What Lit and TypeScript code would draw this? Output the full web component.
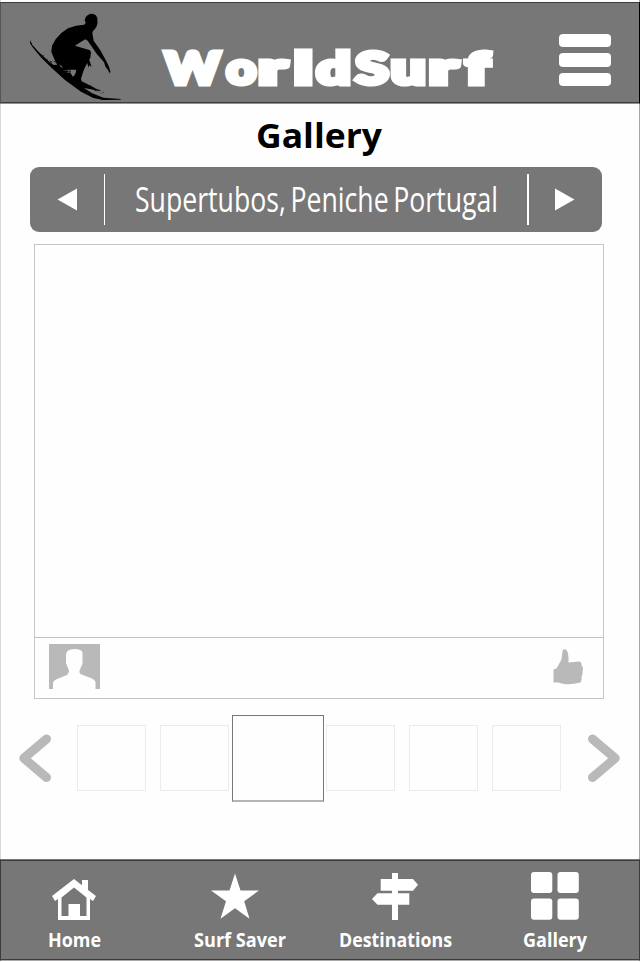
import { LitElement, html, svg, css } from "lit";
import { customElement } from "lit/decorators.js";

interface Fit { text: string; width: number; }

/** Text stretched to a known advance width. */
const fitted = (cls: string, f: Fit, height: number, baseline: number) => html`
  <svg class=${cls} width=${f.width} height=${height}>
    <text x="0" y=${baseline} textLength=${f.width} lengthAdjust="spacingAndGlyphs">${f.text}</text>
  </svg>`;

const LOGO: [string, number, number][] = [
  ["W", 3, 55], ["o", 64.5, 29.5], ["r", 96.5, 28], ["l", 132, 18.5], ["d", 154.5, 34],
  ["S", 193.5, 33], ["u", 229, 34.5], ["r", 267, 28.5], ["f", 303.5, 24],
];

const home = svg`<svg width="44" height="42" viewBox="0 0 44 42" fill="#fff">
  <path d="M22 0 30 6.3V1h6v10l8 6-3 5-3-2V41H6V20l-3 2-3-5Z"/>
  <path fill="#777" d="M22 8.5 34.5 18.5V37H28V25H16.5V37H9.500V18.500Z"/></svg>`;
const star = svg`<svg width="48" height="46" viewBox="0 0 48 46" fill="#fff">
  <path d="M24 0 29.500 17H48L33.200 27.700 38.500 45.300 24 34.800 9.500 45.300 15 27.700 0 17H18.500Z"/></svg>`;
const sign = svg`<svg width="46" height="47" viewBox="0 0 46 47" fill="#fff">
  <path d="M20 0H26V6H41L46 11.800 41 17.700H26V20.300H37.300V31.800H26V47H20V31.800H5.500L0 26 5.500 20.300H20V17.700H8.700V6H20Z"/></svg>`;
const grid = svg`<svg width="48" height="48" viewBox="0 0 48 48" fill="#fff">
  <rect width="21.300" height="21" rx="3"/><rect x="26.500" width="21.300" height="21" rx="3"/>
  <rect y="26.500" width="21.300" height="21.300" rx="3"/><rect x="26.500" y="26.500" width="21.300" height="21.300" rx="3"/></svg>`;

const TABS = [
  { icon: home, label: { text: "Home", width: 53 }, cls: "home" },
  { icon: star, label: { text: "Surf Saver", width: 92 }, cls: "saver" },
  { icon: sign, label: { text: "Destinations", width: 113 }, cls: "dest" },
  { icon: grid, label: { text: "Gallery", width: 64 }, cls: "gal" },
];

@customElement("app-root")
export class AppRoot extends LitElement {
  static styles = css`
    :host { display: block; width: 640px; height: 962px; background: #fefefe; font-family: "Open Sans", "Noto Sans", sans-serif; }
    * { box-sizing: border-box; }
    svg { display: block; overflow: visible; flex: none; }
    .page { display: flex; flex-direction: column; height: 961px; padding-top: 2px; border-left: 1px solid #d8d8d8; border-right: 1px solid #a6a6a6; }
    header { display: flex; flex: none; height: 102px; margin: 0 -1px; background: #777; border: 1px solid #3c3c3c; border-left-color: #555; border-right-color: #000; box-shadow: inset 0 -1px #3c3c3c; border-bottom-color: #929292; }
    .surfer { margin: 9px 0 0 27px; }
    .logo { margin: 45px 0 0 40px; font: 900 43px Lato, sans-serif; fill: #fff; stroke: #fff; stroke-width: 5px; }
    .menu { display: flex; flex-direction: column; gap: 6px; margin: 30.500px 0 0 64.500px; }
    .menu i { width: 52.500px; height: 13.500px; border-radius: 4px; background: #fff; }
    main { flex: 1; display: flex; flex-direction: column; }
    .title { margin: 13px 0 0 255px; font: 700 34px "Open Sans", sans-serif; fill: #000; }
    .bar { display: flex; flex: none; margin: 10px 0 0 29px; width: 572px; height: 64.500px; border-radius: 9px; background: #777; }
    .bar .prev { margin: 21px 0 0 27px; }
    .bar .rule { width: 1.500px; height: 51px; margin-top: 6.500px; background: #fff; }
    .bar .first { margin-left: 26.500px; }
    .bar .place { margin: 0 0 0 29.500px; font-size: 34.500px; word-spacing: -3px; fill: #fff; }
    .bar .second { margin-left: 29.500px; }
    .bar .next { margin: 21px 0 0 26px; }
    .photo { flex: none; display: flex; flex-direction: column; width: 570px; height: 455px; margin: 12.500px 0 0 33px; border: 1px solid #c6c6c6; }
    .view { height: 393px; border-bottom: 1px solid #c2c2c2; }
    .meta { flex: 1; display: flex; justify-content: space-between; padding: 6px 19px 0 13.500px; }
    .thumbs { display: flex; align-items: center; height: 87px; margin-top: 15.500px; padding-left: 17.500px; }
    .strip { display: flex; align-items: center; gap: 14px; margin: 0 26.500px 0 26.500px; }
    .thumb { width: 69px; height: 66px; border: 1px solid #ebebeb; }
    .thumb.on { width: 92px; height: 87px; margin: 0 -12px 0 -11px; border: 1px solid #777; border-bottom: 2px solid #b4b4b4; background: #fefefe; }
    footer { display: flex; flex: none; margin: 0 -1px; height: 102px; background: #777; border: 1px solid #3c3c3c; border-top-color: #777; border-bottom-color: #aaa; box-shadow: inset 0 1px #3c3c3c, inset 0 -1px #3c3c3c; }
    .tab { display: flex; flex-direction: column; align-items: center; }
    .tab .art { display: flex; align-items: flex-end; height: 60px; }
    .label { font: 700 20px "Open Sans", sans-serif; fill: #fff; margin-top: 7px; }
    .home { margin-left: 46.500px; }
    .saver { margin-left: 93px; }
    .dest { margin-left: 53px; }
    .gal { margin-left: 71.500px; }
    .home .art { transform: translateY(1px); }
    .saver .art { transform: translate(-5px, -0.500px); }
  `;

  render() {
    return html`<div class="page">
      <header>
        <svg class="surfer" width="94" height="90" viewBox="84 36 282 270">
          <path d="M257 52Q264 41 276 41Q289 42 292 55Q294 69 290 79Q285 89 279 93L277 100L281 122L301 151L319 184L326 198L331 214L330 221L324 210L317 201L312 187L290 161L263 122L256 118L241 127L225 137L270 151L273 158L271 173L263 187L254 204L249 217L243 236L245 244L263 253L288 266L302 274L284 270L265 266L252 264L275 279L310 293L362 297V299L309 300L280 294L243 275L195 240L156 205L124 173L99 143L90 130L91 121L97 135L117 157L146 184L161 195L172 194L166 184L159 168L154 155L156 137L167 118L184 99L204 85L228 77L253 74L257 68L254 60Z"/>
          <path fill="#777" d="M176 191L189 202L183 202ZM189 211L207 209L229 209L226 222L219 231L212 220L205 222L199 218Z"/>
          <path d="M259 181L266 174L271 190L275 201L268 195L266 203ZM186 211L213 212L211 216L205 214L200 219L190 215ZM198 219L212 217L210 224L203 225Z"/>
          <path d="M126 163l7 5-2 1zM137 174l8 7-3-1zM148 181l9 5-3 2zM158 184l14 1 8 6-11-3zM169 190l13 4-6 3zM176 181l5 8-2 1zM288 266l14 5-3 2zM305 274l9 5-4-1zM278 261l7 4-4 0zM268 256l9 2-4 1zM280 267l13 7-7-1zM298 277l9 4-5-1z"/>
        </svg>
        <svg class="logo" width="332" height="42">
          ${LOGO.map(([c, x, w]) => svg`<text x=${x} y="36.200" textLength=${w} lengthAdjust="spacingAndGlyphs">${c}</text>`)}
        </svg>
        <div class="menu"><i></i><i></i><i></i></div>
      </header>
      <main>
        ${fitted("title", { text: "Gallery", width: 126 }, 40, 31)}
        <div class="bar">
          <svg class="prev" width="20" height="23"><path fill="#fff" d="M0.500 11.500 20 0.500V22.500Z"/></svg>
          <div class="rule first"></div>
          ${fitted("place", { text: "Supertubos, Peniche Portugal", width: 363 }, 64, 44.5)}
          <div class="rule second"></div>
          <svg class="next" width="20" height="23"><path fill="#fff" d="M19.500 11.500 0 0.500V22.500Z"/></svg>
        </div>
        <section class="photo">
          <div class="view"></div>
          <div class="meta">
            <svg width="51" height="45" viewBox="0 0 51 45"><path fill="#b9b9b9" d="M0 0H51V45H46.500V38Q46 36 43 34.500L34 31Q31 30 30.500 28.500V27L32 23Q34 20 33.500 18V9Q33 5 25.500 5Q17 5 17 11V19L19 24Q20 26 20 28L18 31L8 35Q4 37 4 39V45H0Z"/></svg>
            <svg width="31" height="46" viewBox="0 0 31 46"><path fill="#b9b9b9" d="M0.500 25.500 3.500 24.500 8.500 15.500 9.500 7Q10 4.500 13 5.500Q16 8.500 15.500 18.500L26 17.500Q29 18 28.500 21.500Q31 24 29.500 27.500Q30 30 28.500 33Q29 36 27.500 38.500Q18 41 11 40L5 38.500H0.500Z"/></svg>
          </div>
        </section>
        <div class="thumbs">
          <svg width="32" height="48"><path d="M27.500 5 4.800 24.200 27.500 43.500" fill="none" stroke="#b9b9b9" stroke-width="9" stroke-linecap="round" stroke-linejoin="round"/></svg>
          <div class="strip">${[0, 1, 2, 3, 4, 5].map((i) => html`<div class=${i === 2 ? "thumb on" : "thumb"}></div>`)}</div>
          <svg width="32" height="48"><path d="M4.500 5 27.200 24.200 4.500 43.500" fill="none" stroke="#b9b9b9" stroke-width="9" stroke-linecap="round" stroke-linejoin="round"/></svg>
        </div>
      </main>
      <footer>
        ${TABS.map((t) => html`<div class="tab ${t.cls}"><div class="art">${t.icon}</div>${fitted("label", t.label, 28, 20)}</div>`)}
      </footer>
    </div>`;
  }
}
